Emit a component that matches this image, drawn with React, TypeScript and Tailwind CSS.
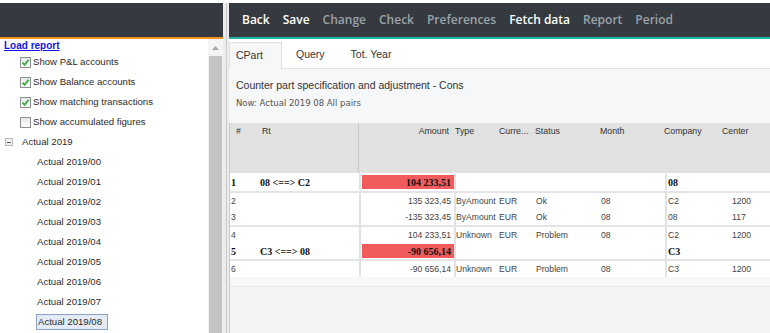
import React from "react";

const sans = "font-['Liberation_Sans',Arial,sans-serif]";
const serif = "font-['Liberation_Serif','Times_New_Roman',serif]";

function Check({ on }: { on: boolean }) {
  return (
    <span className="w-[11px] h-[11px] border border-[#8e8f8f] bg-gradient-to-b from-[#e9eaeb] to-[#fbfbfb] flex items-center justify-center shrink-0">
      {on && (
        <svg width="9" height="9" viewBox="0 0 9 9">
          <path d="M1.5 4.6 L3.6 6.8 L7.6 1.8" fill="none" stroke="#3da73d" strokeWidth="1.8" />
        </svg>
      )}
    </span>
  );
}

const options = [
  { label: "Show P&L accounts", on: true },
  { label: "Show Balance accounts", on: true },
  { label: "Show matching transactions", on: true },
  { label: "Show accumulated figures", on: false },
];

const periods = ["00", "01", "02", "03", "04", "05", "06", "07", "08"];

const nav = [
  { t: "Back", on: true },
  { t: "Save", on: true },
  { t: "Change", on: false },
  { t: "Check", on: false },
  { t: "Preferences", on: false },
  { t: "Fetch data", on: true },
  { t: "Report", on: false },
  { t: "Period", on: false },
];

type Row = {
  n: string;
  rt?: string;
  amount?: string;
  type?: string;
  cur?: string;
  status?: string;
  month?: string;
  company?: string;
  center?: string;
  bold?: boolean;
};

const groups: Row[][] = [
  [{ n: "1", rt: "08 <==> C2", amount: "104 233,51", company: "08", bold: true }],
  [
    { n: "2", amount: "135 323,45", type: "ByAmount", cur: "EUR", status: "Ok", month: "08", company: "C2", center: "1200" },
    { n: "3", amount: "-135 323,45", type: "ByAmount", cur: "EUR", status: "Ok", month: "08", company: "08", center: "117" },
  ],
  [
    { n: "4", amount: "104 233,51", type: "Unknown", cur: "EUR", status: "Problem", month: "08", company: "C2", center: "1200" },
    { n: "5", rt: "C3 <==> 08", amount: "-90 656,14", company: "C3", bold: true },
  ],
  [{ n: "6", amount: "-90 656,14", type: "Unknown", cur: "EUR", status: "Problem", month: "08", company: "C3", center: "1200" }],
];

function DataRow({ r }: { r: Row }) {
  const font = r.bold ? `${serif} font-bold text-[10px] text-[#111]` : `${sans} text-[8.6px] text-[#444]`;
  return (
    <div className={`flex h-[16px] items-center whitespace-nowrap ${font}`}>
      <div className="w-[28px] pl-[1px]">{r.n}</div>
      <div className="w-[101px] pl-[2px]">{r.rt}</div>
      <div className="w-[95px] h-full border-l-2 border-[#e2e2e2] py-[1px] pl-[1px]">
        <div className={`h-full flex items-center justify-end pr-[3px] ${r.bold ? "bg-[#f15b5b]" : ""}`}>{r.amount}</div>
      </div>
      <div className="w-[43px] h-full border-l-2 border-[#e2e2e2] flex items-center">{r.type}</div>
      <div className="w-[36px] pl-[2px]">{r.cur}</div>
      <div className="w-[65px] pl-[3px]">{r.status}</div>
      <div className="w-[67px] pl-[3px]">{r.month}</div>
      <div className="w-[58px] h-full border-l-2 border-[#e2e2e2] flex items-center pl-[1px]">{r.company}</div>
      <div className="flex-1 pl-[9px]">{r.center}</div>
    </div>
  );
}

export default function App() {
  return (
    <div className="w-[770px] h-[333px] overflow-hidden bg-white flex flex-col">
      <div className="h-[3px] bg-white" />
      <div className="flex flex-1 min-h-0">
        {/* ── Left panel ── */}
        <div className="w-[223px] flex flex-col">
          <div className="h-[34px] bg-[#353a40]" />
          <div className="h-[2px] bg-[#f39322]" />
          <div className="flex flex-1 min-h-0">
            <div className={`flex-1 flex flex-col text-[9.6px] text-[#2b2b2b] ${sans}`}>
              <div className="h-[13px] pl-[4px] leading-[13px] text-[10px] font-bold text-[#1515e8] underline">Load report</div>
              {options.map((o) => (
                <div key={o.label} className="h-[20px] flex items-center gap-[2px] pl-[20px]">
                  <Check on={o.on} />
                  <span>{o.label}</span>
                </div>
              ))}
              <div className="h-[20px] flex items-center pl-[5px] gap-[9px]">
                <span className="w-[8px] h-[8px] border border-[#b9b9b9] bg-[#f2f2f2] flex items-center justify-center">
                  <span className="w-[4px] h-[1px] bg-[#555]" />
                </span>
                <span>Actual 2019</span>
              </div>
              {periods.map((p) => (
                <div key={p} className="h-[20px] flex items-center pl-[36px]">
                  {p === "08" ? (
                    <span className="border border-[#8aa3c8] bg-[#e4ebf6] px-[1px] pr-[5px] leading-[14px]">Actual 2019/{p}</span>
                  ) : (
                    <span className="pl-[1px]">Actual 2019/{p}</span>
                  )}
                </div>
              ))}
            </div>
            <div className="w-[15px] bg-[#f4f4f4] flex flex-col items-center">
              <div className="h-[17px] flex items-center justify-center">
                <svg width="7" height="4" viewBox="0 0 7 4">
                  <path d="M0 4 L3.5 0 L7 4 Z" fill="#a8a8a8" />
                </svg>
              </div>
              <div className="w-[13px] flex-1 bg-[#c4c4c4]" />
            </div>
          </div>
        </div>

        {/* ── Splitter ── */}
        <div className="w-[6px] bg-[#ececec] flex justify-center">
          <div className="w-[1px] bg-[#c8c8c8]" />
        </div>

        {/* ── Right panel ── */}
        <div className="flex-1 flex flex-col min-w-0">
          <div className="h-[34px] bg-[#353a40] flex items-center gap-[13px] pl-[13px] font-['Open_Sans',sans-serif] font-semibold text-[12px]">
            {nav.map((n) => (
              <span key={n.t} className={n.on ? "text-white" : "text-[#9ba1a9]"}>
                {n.t}
              </span>
            ))}
          </div>
          <div className="h-[2px] bg-[#1fb4a6]" />

          {/* Tabs */}
          <div className={`h-[30px] bg-white border-b border-[#dfe2e6] flex items-end text-[10.5px] text-[#333] ${sans}`}>
            <div className="h-[27px] w-[53px] -mb-[1px] border border-b-0 border-[#dfe2e6] bg-[#f6f7f9] flex items-center pl-[6px]">CPart</div>
            <div className="h-[27px] flex items-center pl-[14px]">Query</div>
            <div className="h-[27px] flex items-center pl-[26px]">Tot. Year</div>
          </div>

          {/* Content */}
          <div className="flex-1 bg-[#f6f7f9] flex flex-col min-h-0">
            <div className={`pt-[9px] pl-[7px] ${sans}`}>
              <div className="h-[14px] leading-[14px] text-[10.5px] text-[#333]">Counter part specification and adjustment - Cons</div>
              <div className="h-[12px] leading-[12px] mt-[5px] text-[8.5px] text-[#555] font-['DejaVu_Sans',sans-serif]">Now: Actual 2019 08 All pairs</div>
            </div>

            <div className="mt-[14px] flex-1 border-l border-[#c9c9c9] bg-[#f4f4f4] flex flex-col">
              <div className={`h-[50px] bg-[#e1e1e1] flex text-[8.8px] text-[#333] ${sans}`}>
                <div className="w-[28px] pl-[6px] pt-[2px]">#</div>
                <div className="w-[101px] pl-[4px] pt-[2px] border-r border-[#c8c8c8]">Rt</div>
                <div className="w-[95px] pr-[5px] pt-[2px] text-right">Amount</div>
                <div className="w-[44px] pl-[1px] pt-[2px]">Type</div>
                <div className="w-[36px] pl-[1px] pt-[2px]">Curre...</div>
                <div className="w-[65px] pl-[1px] pt-[2px]">Status</div>
                <div className="w-[65px] pl-[1px] pt-[2px]">Month</div>
                <div className="w-[58px] pt-[2px]">Company</div>
                <div className="flex-1 pt-[2px]">Center</div>
              </div>
              <div className="bg-white">
                {groups.map((g, i) => (
                  <div key={i} className={`${i < groups.length - 1 ? "border-b-2 border-[#e4e4e4]" : ""} ${i === 0 ? "py-[1px]" : ""}`}>
                    {g.map((r) => (
                      <DataRow key={r.n} r={r} />
                    ))}
                  </div>
                ))}
              </div>
              <div className="h-[10px] border-b border-[#e8e8e8] bg-[#f7f7f7]" />
            </div>
          </div>
        </div>
      </div>
    </div>
  );
}
